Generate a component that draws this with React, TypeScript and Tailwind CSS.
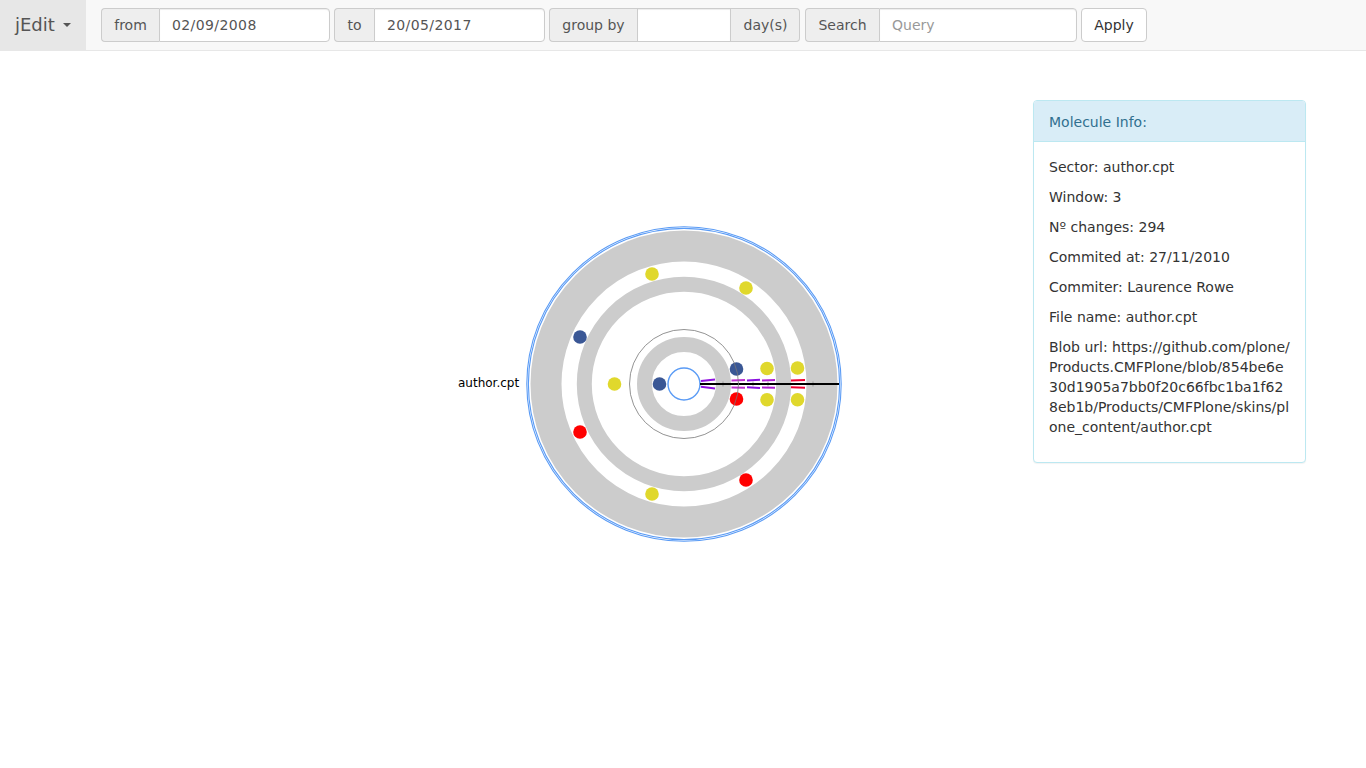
const FONT = "font-['DejaVu_Sans',sans-serif]";

const addon =
  'flex items-center justify-center shrink-0 bg-[#eeeeee] border border-[#cccccc] text-sm text-[#555555] whitespace-nowrap';
const field =
  'flex items-center px-3 bg-white border border-[#cccccc] text-sm text-[#555555] shadow-[inset_0_1px_1px_rgba(0,0,0,0.075)]';

const YELLOW = '#e0d82c';
const NAVY = '#3a5795';
const RED = '#ff0000';

const dots = [
  { x: 652, y: 274, c: YELLOW },
  { x: 746, y: 288, c: YELLOW },
  { x: 580, y: 337, c: NAVY },
  { x: 614.5, y: 384, c: YELLOW },
  { x: 659.5, y: 384, c: NAVY },
  { x: 736.5, y: 369, c: NAVY },
  { x: 736.5, y: 399, c: RED },
  { x: 767, y: 368.5, c: YELLOW },
  { x: 767, y: 399.7, c: YELLOW },
  { x: 797.5, y: 368, c: YELLOW },
  { x: 797.5, y: 399.7, c: YELLOW },
  { x: 580, y: 432, c: RED },
  { x: 746, y: 480, c: RED },
  { x: 652, y: 494, c: YELLOW },
];

// bond marks either side of the axis, slightly fanned out
const bonds = [
  { x1: 701, x2: 715, c: '#9010e0', fan: 1.6 },
  { x1: 731.5, x2: 745, c: '#c030d0', fan: 0.4 },
  { x1: 747, x2: 760, c: '#8a10e0', fan: 0.8 },
  { x1: 762, x2: 775, c: '#b020d0', fan: 0.4 },
  { x1: 791, x2: 805, c: '#f00030', fan: 0.5 },
];

const ticks = [723, 753, 768, 813];

const info = [
  'Sector: author.cpt',
  'Window: 3',
  'Nº changes: 294',
  'Commited at: 27/11/2010',
  'Commiter: Laurence Rowe',
  'File name: author.cpt',
];

function Molecule() {
  return (
    <svg width="420" height="340" viewBox="440 214 420 340" className="block shrink-0">
      <circle cx="684" cy="384" r="157.2" fill="none" stroke="#5a9bf5" strokeWidth="1.1" />
      <circle cx="684" cy="384" r="155.6" fill="none" stroke="#5a9bf5" strokeWidth="1.1" />
      <circle cx="684" cy="384" r="138" fill="none" stroke="#cccccc" strokeWidth="31" />
      <circle cx="684" cy="384" r="99.7" fill="none" stroke="#cccccc" strokeWidth="15" />
      <circle cx="684" cy="384" r="39.5" fill="none" stroke="#cccccc" strokeWidth="15" />
      <circle cx="684" cy="384" r="16" fill="#ffffff" stroke="#5a9bf5" strokeWidth="1.4" />
      {bonds.map(b => (
        <g key={b.x1} stroke={b.c} strokeWidth="2">
          <line x1={b.x1} y1={380.2 + b.fan / 2} x2={b.x2} y2={380.2 - b.fan / 2} />
          <line x1={b.x1} y1={387.6 - b.fan / 2} x2={b.x2} y2={387.6 + b.fan / 2} />
        </g>
      ))}
      {ticks.map(x => (
        <line key={x} x1={x} y1="381.5" x2={x} y2="386.5" stroke="#777777" strokeWidth="0.6" />
      ))}
      <line x1="700" y1="384" x2="839" y2="384" stroke="#000000" strokeWidth="2" />
      {dots.map(d => (
        <circle key={`${d.x}-${d.y}`} cx={d.x} cy={d.y} r="6.8" fill={d.c} />
      ))}
      <circle cx="684" cy="384" r="54.5" fill="none" stroke="#777777" strokeWidth="0.8" />
      <text x="458" y="387" fontSize="12" fill="#000000" fontFamily="'DejaVu Sans', sans-serif">
        author.cpt
      </text>
    </svg>
  );
}

export default function App() {
  return (
    <div className={`${FONT} min-h-[768px] bg-white text-sm text-[#333333]`}>
      <nav className="flex h-[51px] bg-[#f8f8f8] border-b border-[#e7e7e7]">
        <div className="flex items-center w-[86px] h-[50px] pl-[15px] bg-[#e7e7e7] text-[#555555] text-lg">
          jEdit
          <span className="ml-2 border-x-4 border-x-transparent border-t-4 border-t-[#555555]" />
        </div>
        <form className="flex items-start gap-1 pt-2 pl-[15px]">
          <div className="flex h-[34px] w-[229px]">
            <span className={`${addon} w-[58px] rounded-l border-r-0`}>from</span>
            <span className={`${field} flex-1 rounded-r tracking-[0.4px]`}>02/09/2008</span>
          </div>
          <div className="flex h-[34px] w-[211px]">
            <span className={`${addon} w-[40px] rounded-l border-r-0`}>to</span>
            <span className={`${field} flex-1 rounded-r tracking-[0.4px]`}>20/05/2017</span>
          </div>
          <div className="flex h-[34px] w-[251px]">
            <span className={`${addon} w-[88px] rounded-l border-r-0`}>group by</span>
            <span className={`${field} flex-1`} />
            <span className={`${addon} w-[69px] pl-px rounded-r border-l-0`}>day(s)</span>
          </div>
          <div className="flex h-[34px] w-[272px] ml-[1px]">
            <span className={`${addon} w-[74px] rounded-l border-r-0`}>Search</span>
            <span className={`${field} flex-1 rounded-r text-[#999999]`}>Query</span>
          </div>
          <button type="button" className="h-[34px] w-[66px] bg-white border border-[#cccccc] rounded text-sm text-[#333333]">
            Apply
          </button>
        </form>
      </nav>

      <main className="flex items-start pl-[440px]">
        <div className="pt-[163px]">
          <Molecule />
        </div>
        <section className="w-[273px] ml-[173px] mt-[49px] bg-white border border-[#bce8f1] rounded shadow-[0_1px_1px_rgba(0,0,0,0.05)]">
          <div className="h-[41px] flex items-center pt-px px-[15px] bg-[#d9edf7] border-b border-[#bce8f1] rounded-t-[3px] text-[#31708f]">
            Molecule Info:
          </div>
          <div className="p-[15px]">
            {info.map(line => (
              <p key={line} className="mb-[10px] leading-5">{line}</p>
            ))}
            <p className="mb-[10px] leading-5 break-all">
              Blob url: https://github.com/plone/Products.CMFPlone/blob/854be6e30d1905a7bb0f20c66fbc1ba1f628eb1b/Products/CMFPlone/skins/plone_content/author.cpt
            </p>
          </div>
        </section>
      </main>
    </div>
  );
}
